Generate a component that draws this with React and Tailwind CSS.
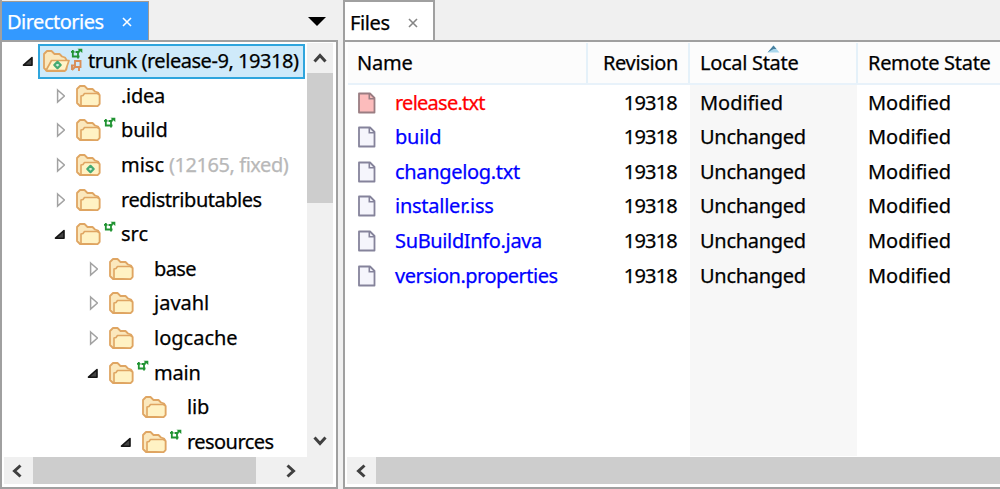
import React from 'react';
import clsx from 'clsx';

// --- Data ---
const tree = [
  { pad: 'pl-[17px]', label: 'trunk (release-9, 19318)', arrow: 'open', folder: 'root', selected: true, track: 'tracking-[-0.45px]' },
  { pad: 'pl-[49px]', label: '.idea', arrow: 'closed', track: 'tracking-[-0.3px]' },
  { pad: 'pl-[49px]', label: 'build', arrow: 'closed', tag: true, track: 'tracking-[-0.15px]' },
  { pad: 'pl-[49px]', label: 'misc', note: '(12165, fixed)', arrow: 'closed', folder: 'external', track: 'tracking-[0px]' },
  { pad: 'pl-[49px]', label: 'redistributables', arrow: 'closed', track: 'tracking-[-0.47px]' },
  { pad: 'pl-[49px]', label: 'src', arrow: 'open', tag: true, track: 'tracking-[0px]' },
  { pad: 'pl-[82px]', label: 'base', arrow: 'closed', track: 'tracking-[-0.6px]' },
  { pad: 'pl-[82px]', label: 'javahl', arrow: 'closed', track: 'tracking-[0px]' },
  { pad: 'pl-[82px]', label: 'logcache', arrow: 'closed', track: 'tracking-[0px]' },
  { pad: 'pl-[82px]', label: 'main', arrow: 'open', tag: true, track: 'tracking-[-0.2px]' },
  { pad: 'pl-[115px]', label: 'lib', track: 'tracking-[-0.1px]' },
  { pad: 'pl-[115px]', label: 'resources', arrow: 'open', tag: true, track: 'tracking-[-0.55px]' },
];

const files = [
  { name: 'release.txt', local: 'Modified', modified: true, track: 'tracking-[-0.75px]' },
  { name: 'build', local: 'Unchanged', track: 'tracking-[-0.2px]' },
  { name: 'changelog.txt', local: 'Unchanged', track: 'tracking-[-0.32px]' },
  { name: 'installer.iss', local: 'Unchanged', track: 'tracking-[-0.25px]' },
  { name: 'SuBuildInfo.java', local: 'Unchanged', track: 'tracking-[-0.35px]' },
  { name: 'version.properties', local: 'Unchanged', track: 'tracking-[-0.5px]' },
];

// --- Icons ---
const TreeArrow = ({ type }) => (
  <svg className="w-[14px] h-[16px] shrink-0" viewBox="0 0 14 16">
    {type === 'open' && <path d="M4.500 12.200 L13 4.500 V12.200 Z" fill="#444" stroke="#151515" strokeWidth="1.6" strokeLinejoin="round" />}
    {type === 'closed' && <path d="M6.600 2 L13.400 8 L6.600 14 Z" fill="#fff" stroke="#a2a2a2" strokeWidth="1.500" />}
  </svg>
);

const FolderIcon = ({ type }) => (
  <svg className="w-[28px] h-[24px] shrink-0" viewBox="0 0 28 24">
    <path
      d="M2 18 V5 L5 2 H9.500 L12.500 5 H17.500 L20 7.500 L23 8.500 L24.500 11 V20 L22.500 22 H5 L2 19 Z"
      fill="#fbe8bd"
      stroke="#dfa562"
      strokeWidth="1.8"
      strokeLinejoin="round"
    />
    {type === 'root' ? (
      <path d="M4 21.500 L9.500 11.500 H27 L23.500 21.500 Z" fill="#fff4c9" stroke="#dfa562" strokeWidth="1.7" strokeLinejoin="round" />
    ) : (
      <path d="M6 21.500 V12 L8 11.500 L9.500 9.500 H22.500 L24.500 11 V20 L22.500 22 Z" fill="#fff2c4" stroke="#dfa562" strokeWidth="1.600" strokeLinejoin="round" />
    )}
    {type && <path d="M15.500 12.800 L18.700 16 L15.500 19.200 L12.300 16 Z" fill="#d5efdc" stroke="#45aa72" strokeWidth="2.2" strokeLinejoin="round" />}
  </svg>
);

const TagIcon = ({ root }) => (
  <svg className="w-[14px] h-[28px] shrink-0" viewBox="0 0 14 28">
    <path d="M2.800 3 V10.500 M1 4.800 H4.500 M2 9.500 H9.500 M8 11.500 V5 L10.500 3 M5.500 5 H9.500" fill="none" stroke="#209332" strokeWidth="1.800" />
    <path d="M7.500 1.800 H12.300 V6 Z" fill="#209332" />
    {root && <path d="M5 14 H10.500 V20 H5 Z M5 20 L2 23 M9 20 V24 M2 18.500 V23 M1 18.500 H5" fill="none" stroke="#d98e57" strokeWidth="1.900" />}
  </svg>
);

const FileIcon = ({ modified }) => (
  <svg className="w-[20px] h-[22px] shrink-0" viewBox="0 0 20 22">
    <path
      d="M2 1.500 H13 L17.500 6 V20.500 H2 Z"
      fill={modified ? '#fcbcbc' : '#f5f5fc'}
      stroke={modified ? '#9a7d82' : '#85839b'}
      strokeWidth="1.800"
      strokeLinejoin="round"
    />
    <path d="M12.300 1.500 V6.800 H17.500" fill="none" stroke={modified ? '#9a7d82' : '#85839b'} strokeWidth="1.600" />
  </svg>
);

const CloseIcon = ({ className }) => (
  <svg className={clsx('w-[10px] h-[10px]', className)} viewBox="0 0 10 10">
    <path d="M1 1 L9 9 M9 1 L1 9" fill="none" stroke="currentColor" strokeWidth="1.6" />
  </svg>
);

const Chevron = ({ className }) => (
  <svg className={clsx('w-[14px] h-[14px]', className)} viewBox="0 0 14 14">
    <path d="M1.500 10.500 L7 4.500 L12.500 10.500" fill="none" stroke="#404040" strokeWidth="3" />
  </svg>
);

// --- Directories ---
const TreeRow = ({ item }) => (
  <div className={clsx('flex items-center h-[34.600px] shrink-0 whitespace-pre', item.pad)}>
    <TreeArrow type={item.arrow} />
    <div
      className={clsx(
        'flex items-center h-[35px] border-2',
        item.selected ? 'ml-[5px] border-[#2fa5dd] bg-[#cfeafa] w-[267px] pl-[2px]' : 'ml-[4px] border-transparent pl-[4px]'
      )}
    >
      <FolderIcon type={item.folder} />
      {item.selected || item.tag ? <TagIcon root={item.selected} /> : <span className="w-[14px]" />}
      <span className="ml-[4px]">
        <span className={item.track}>{item.label}</span>
      </span>
      {item.note && <span className="ml-[5px] text-[#b8b8b8] tracking-[-0.45px]">{item.note}</span>}
    </div>
  </div>
);

const DirectoriesPanel = () => (
  <div className="w-[339px] h-full flex flex-col shrink-0">
    <div className="flex h-[40px] items-end justify-between border-l-2 border-[#a0a0a0]">
      <div className="flex items-center w-[147px] h-[39px] bg-[#3399ff] text-white pl-[5px] pt-px border-t border-r border-[#a09a94]">
        <span className="tracking-[-0.5px]">Directories</span>
        <CloseIcon className="ml-[18px]" />
      </div>
      <svg className="w-[20px] h-[11px] mb-[13px] mr-[12px]" viewBox="0 0 20 11">
        <path d="M1 1 H19 L10 10 Z" fill="#000" />
      </svg>
    </div>
    <div className="flex-1 min-h-0 flex flex-col bg-white border-2 border-[#a0a0a0] mr-px">
      <div className="flex h-[415px] shrink-0">
        <div className="flex flex-col w-[305px] overflow-hidden pt-[2px]">
          {tree.map((item) => (
            <TreeRow key={item.label} item={item} />
          ))}
        </div>
        <div className="flex flex-col items-center w-[26px] bg-[#f0f0f0] mt-px">
          <div className="flex items-center justify-center h-[30px]">
            <Chevron />
          </div>
          <div className="w-full h-[130px] bg-[#cdcdcd]" />
          <Chevron className="rotate-180 mt-auto mb-[9px]" />
        </div>
      </div>
      <div className="flex items-center h-[27px] ml-[2px] mr-[3px] bg-[#f0f0f0]">
        <Chevron className="-rotate-90 ml-[6px]" />
        <div className="ml-[9px] w-[223px] h-full bg-[#cdcdcd]" />
        <Chevron className="rotate-90 ml-[28px]" />
      </div>
    </div>
  </div>
);

// --- Files ---
const FilesPanel = () => (
  <div className="flex-1 min-w-0 h-full flex flex-col ml-[4px]">
    <div className="flex items-center w-[92px] h-[41px] bg-white border-t-2 border-x-2 border-[#a0a0a0] pl-[5px] pt-[2px]">
      <span className="tracking-[-0.4px]">Files</span>
      <CloseIcon className="ml-[18px] text-[#858585]" />
    </div>
    <div className="flex-1 min-h-0 flex flex-col bg-white border-l-2 border-y-2 border-[#a0a0a0] -mt-px">
      <div className="flex items-center h-[43px] shrink-0 bg-[#fcfcfc] border-b-2 border-[#e8f2fa] ml-[3px] pt-px whitespace-pre">
        <div className="w-[240px] h-full flex items-center pl-[9px] border-r-2 border-[#e5f1f9] tracking-[-0.2px]">Name</div>
        <div className="w-[102px] h-full flex items-center justify-end pr-[10px] border-r-2 border-[#e5f1f9] tracking-[-0.35px]">Revision</div>
        <div className="relative w-[168px] h-full flex items-center pl-[10px] border-r-2 border-[#e5f1f9] tracking-[-0.3px]">
          Local State
          <svg className="absolute left-[77px] top-[2px] w-[13px] h-[8px]" viewBox="0 0 13 8">
            <path d="M0.500 7.500 L6.500 0.500 L12.500 7.500 Z" fill="#a9d6ec" />
            <path d="M0.500 7.500 L6.500 0.500 L9.500 4 L6.500 4 Z" fill="#47809f" />
          </svg>
        </div>
        <div className="pl-[10px] tracking-[-0.3px]">Remote State</div>
      </div>
      <div className="flex h-[371px] shrink-0 whitespace-pre">
        <div className="w-[345px] pt-[0.400px]">
          {files.map((f) => (
            <div key={f.name} className="flex items-center h-[34.600px] pl-[12px]">
              <FileIcon modified={f.modified} />
              <span className={clsx('ml-[18px]', f.modified ? 'text-[#ff0000]' : 'text-[#0000ff]', f.track)}>{f.name}</span>
              <span className="ml-auto pr-[13px] tracking-[-0.8px]">19318</span>
            </div>
          ))}
        </div>
        <div className="w-[167px] bg-[#f7f7f7] pl-[10px] pt-[0.400px]">
          {files.map((f) => (
            <div
              key={f.name}
              className={clsx('flex items-center h-[34.600px]', f.modified ? 'tracking-[-0.05px]' : 'tracking-[-0.3px]')}
            >
              {f.local}
            </div>
          ))}
        </div>
        <div className="pl-[11px] pt-[0.400px]">
          {files.map((f) => (
            <div key={f.name} className="flex items-center h-[34.600px] tracking-[-0.05px]">Modified</div>
          ))}
        </div>
      </div>
      <div className="flex items-center h-[27px] mt-px ml-[2px] bg-[#f0f0f0]">
        <Chevron className="-rotate-90 ml-[7px]" />
        <div className="ml-[8px] flex-1 h-full bg-[#cdcdcd]" />
      </div>
    </div>
  </div>
);

const App = () => (
  <div className="flex w-[1000px] h-[489px] overflow-hidden bg-[#f0f0f0] text-black text-[20px] leading-[28px] font-['Noto_Sans','Open_Sans',sans-serif] [-webkit-text-stroke:0.25px]">
    <DirectoriesPanel />
    <FilesPanel />
  </div>
);

export default App;
